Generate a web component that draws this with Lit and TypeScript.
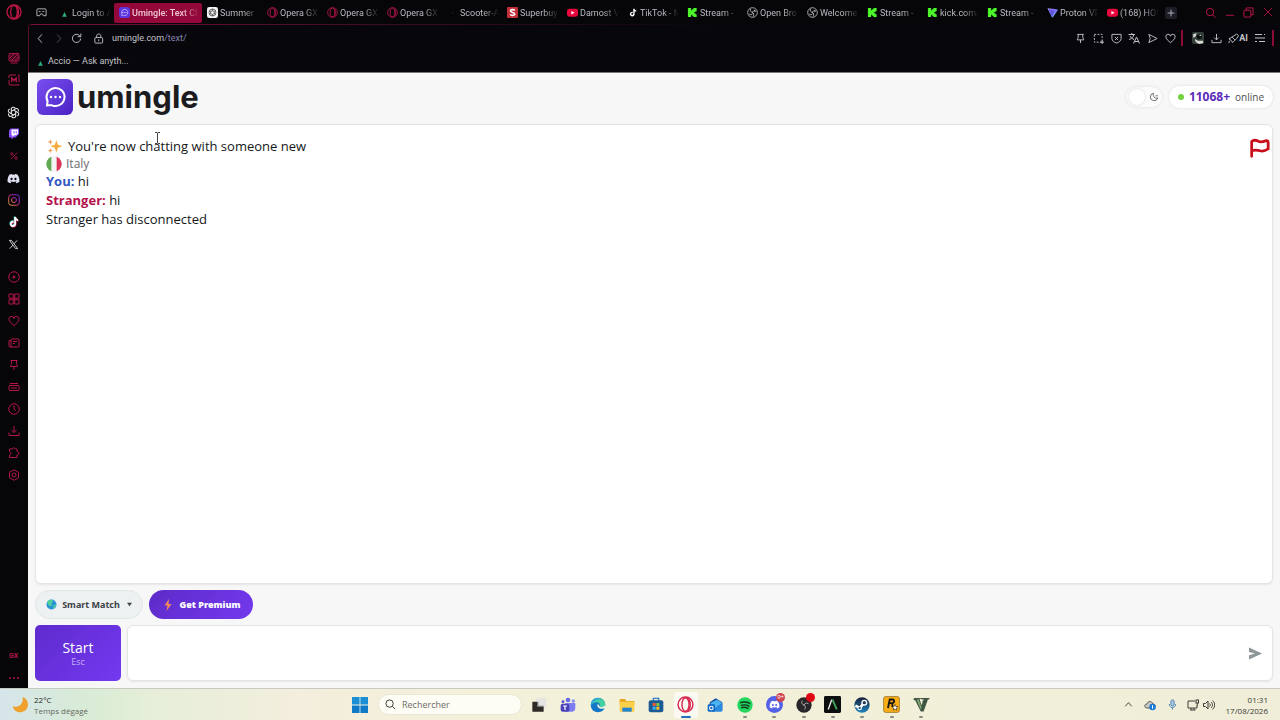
import { LitElement, html, css, svg } from "lit";
import { customElement, state } from "lit/decorators.js";
import { classMap } from "lit/directives/class-map.js";

const line = (body: unknown, cls = "i12") => html`<svg
  class="line ${cls}"
  viewBox="0 0 24 24"
  aria-hidden="true"
>${body}</svg>`;
const fill = (body: unknown, cls = "i12") => html`<svg class=${cls} viewBox="0 0 24 24" aria-hidden="true">${body}</svg>`;

/* ---------- shared shapes ---------- */
const operaRing = svg`<circle cx="12" cy="12" r="10.5"/><ellipse cx="12" cy="12" rx="5" ry="9.5"/><path d="M15 3.4c5 3.6 5 13.600 0 17.200"/>`;
const pin = svg`<path d="M5 3h14M7 3v6c0 2-2 3-2 6h14c0-3-2-4-2-6V3M12 15v7"/>`;
const heart = svg`<path d="M12 21C7 17 2 13 2 8.500A5 5 0 0 1 12 7a5 5 0 0 1 10 1.500C22 13 17 17 12 21z"/>`;
const download = svg`<path d="M12 2v13M7 10l5 5 5-5M2 15v6h20v-6"/>`;
const discordFace = svg`<path d="M19.600 5A18 18 0 0 0 15 3.600l-.7 1.300a15 15 0 0 0-4.600 0L9 3.600A18 18 0 0 0 4.400 5C1.500 9.300.7 13.600 1.100 17.800A18 18 0 0 0 6.700 20.600l1.300-2.100-2-1 .5-.4c3.600 1.700 7.400 1.700 11 0l.5.4-2 1 1.300 2.100a18 18 0 0 0 5.600-2.800c.5-4.900-.8-9.100-3.300-12.800zM8.400 15.200c-1.100 0-2-1-2-2.200s.9-2.200 2-2.200 2 1 2 2.200-.9 2.200-2 2.200zm7.200 0c-1.100 0-2-1-2-2.200s.9-2.200 2-2.200 2 1 2 2.200-.9 2.200-2 2.200z"/>`;
const note = svg`<path d="M12.500 2h3.600c.3 2.500 1.700 4 4.100 4.300v3.600c-1.500 0-2.900-.5-4.100-1.300v6.900c0 8.500-12.300 8.600-12.300.3 0-3.900 3.300-6.700 7.400-6.200v3.800c-2-.5-3.700.6-3.700 2.400 0 3.300 5 3.200 5-.6z"/>`;
const obs = svg`<circle cx="12" cy="12" r="10.500"/><path d="M8 4c-2 5 1 8 5 8M20 9c-5-2-8 0-8 4M13 21c3-4 2-8-2-9.500M4.500 15c3 3 7 2 8-1M15 6c2 1 2.500 3 2 5"/>`;
const bubble = svg`<path d="M4 20.500l.6-4.200A9 9 0 1 1 9 20.300c-1.800-.3-3.200.2-5 .2z"/>`;

const fav: Record<string, unknown> = {
  accio: fill(svg`<path fill="#2fae7a" d="M12 11l5 10H7z"/>`, "i11"),
  umingle: fill(svg`<rect width="24" height="24" rx="6" fill="#5a35e0"/><g fill="none" stroke="#d9cffc" stroke-width="2" transform="translate(3 3) scale(.75)">${bubble}</g><path stroke="#e8e2ff" stroke-width="2" stroke-dasharray="2 1.500" d="M7 12h10"/>`, "i11"),
  gpt: fill(svg`<rect width="24" height="24" rx="5" fill="#f2f2f2"/><g fill="none" stroke="#444" stroke-width="1.700"><circle cx="12" cy="12" r="7.500"/><path d="M12 8l4 2.200v4L12 16.500 8 14.200v-4zM12 4v4M19 8l-3 2.200M19 16l-3-1.800M12 20v-3.500M5 16l3-1.800M5 8l3 2.200"/></g>`, "i11"),
  opera: line(operaRing, "i11 crimson"),
  blank: fill(svg`<path fill="#101014" d="M8 13l5-4 3 4-3 4z"/>`, "i11"),
  superbuy: fill(svg`<rect width="24" height="24" rx="2" fill="#c22f3b"/><path fill="none" stroke="#fff" stroke-width="3.400" d="M17 7.500c-2-2.500-9.500-2.500-9.500 1.200 0 4 9.500 2.200 9.500 6.500 0 4-8 4-10 1"/>`, "i11"),
  yt: fill(svg`<rect y="4" width="24" height="17" rx="5" fill="#e8063c"/><path fill="#fff" d="M9.500 8.500l7 4-7 4z"/>`, "i11"),
  tiktok: fill(svg`<g fill="#fff" transform="translate(3 2) scale(.85)">${note}</g>`, "i11"),
  kick: fill(svg`<path fill="#4cf52a" d="M2 2h7v5h2.500V4.500H14V2h7v7h-2.500v2H16v2.500h2.500V16H21v6h-7v-2.500h-2.500V17H9v5H2z"/>`, "i11"),
  obs: line(obs, "i11 silver"),
  proton: fill(svg`<defs><linearGradient id="pv" x1="0" x2="1" y1="0" y2="1"><stop offset="0" stop-color="#b5a4ff"/><stop offset=".5" stop-color="#7a6cf5"/><stop offset="1" stop-color="#5de0c4"/></linearGradient></defs><path fill="url(#pv)" d="M1 2.500l21 2.200c1.600.2 2 1.800 1 3L13.500 22c-1 1.400-2.400 1.300-3.200 0z"/><path fill="#4c3ecf" d="M3 5l13 2-4.500 14z" opacity=".6"/>`, "i11"),
};

const TABS: [string, string][] = [
  ["accio", "Login to A"],
  ["umingle", "Umingle: Text Ch"],
  ["gpt", "Summer"],
  ["opera", "Opera GX"],
  ["opera", "Opera GX"],
  ["opera", "Opera GX"],
  ["blank", "Scooter-A"],
  ["superbuy", "Superbuy"],
  ["yt", "Damost V"],
  ["tiktok", "TikTok - M"],
  ["kick", "Stream -"],
  ["obs", "Open Bro"],
  ["obs", "Welcome"],
  ["kick", "Stream -"],
  ["kick", "kick.com/"],
  ["kick", "Stream -"],
  ["proton", "Proton VP"],
  ["yt", "(168) HOW"],
];

const SIDE: { label: string; art: unknown }[][] = [
  [
    { label: "GX Corner", art: line(svg`<path fill="currentColor" fill-opacity=".35" d="M4 3h16q2 0 2 2v11q0 2-2 2H4q-2 0-2-2V5q0-2 2-2z"/><path d="M3 13L13 3M6 18L20 4M13 18l9-9M5 22h14"/>`) },
    { label: "Mods", art: line(svg`<path d="M2 8V4q0-2 2-2h12M20 2h2v14M22 20v2H4q-2 0-2-2v-8"/><path stroke-width="2.600" d="M7.500 16.500V8l4.500 5 4.500-5v8.500"/>`) },
  ],
  [
    { label: "ChatGPT", art: line(svg`<path d="M12 7.500l4 2.300v4.600L12 16.700l-4-2.300V9.800zM8 9.800V5.500C8 2 13 1 15 4M12 7.500l4-2.300c3-1.700 6.500 2 4.800 5M16 9.800l4 2.300c3 1.800 1.500 6.500-2 6.500M16 14.400V18.500c0 3.500-5 4.500-7 1.500M12 16.700L8 19c-3 1.700-6.500-2-4.800-5M8 14.400L4 12.100C1 10.300 2.500 5.600 6 5.600"/>`, "i13 white") },
    { label: "Twitch", art: fill(svg`<path fill="#8a4dff" d="M5 1L2 5v14h5v4l4-4h4l7-7V1z"/><path fill="#fff" d="M7 3h13v8l-3.500 3.500h-4L9 18v-3.500H7z"/><path stroke="#8a4dff" stroke-width="2" d="M12 6v5M16.500 6v5"/>`) },
    { label: "Deals", art: line(svg`<circle cx="7" cy="7" r="3"/><circle cx="17" cy="17" r="3"/><path d="M20 4L4 20"/>`, "i10") },
    { label: "Discord", art: fill(svg`<g fill="#dfe0f2">${discordFace}</g>`, "i13") },
    { label: "Instagram", art: html`<svg class="i12" viewBox="0 0 24 24" aria-hidden="true"><defs><linearGradient id="ig" x1="1" y1="0" x2="0" y2="1"><stop offset="0" stop-color="#6a2be0"/><stop offset=".5" stop-color="#c42a86"/><stop offset="1" stop-color="#e8a02c"/></linearGradient></defs><g fill="none" stroke="url(#ig)" stroke-width="2"><rect x="1.500" y="1.500" width="21" height="21" rx="5"/><circle cx="12" cy="12" r="5"/><path d="M17.500 6h1"/></g></svg>` },
    { label: "TikTok", art: fill(svg`<g fill="#39dcd8" transform="translate(-1 -1)">${note}</g><g fill="#ee2b58" transform="translate(1 1)">${note}</g><g fill="#fff">${note}</g>`) },
    { label: "X", art: fill(svg`<path fill="none" stroke="#ddd" stroke-width="2" d="M3 3h4.500L21 21h-4.500zM20 3l-7 7.500M10.500 13.500L4 21"/>`, "i11") },
  ],
  [
    { label: "Player", art: line(svg`<circle cx="12" cy="12" r="10.500"/><path fill="currentColor" d="M10.500 9.500l4 2.500-4 2.500z"/>`) },
    { label: "Speed dial", art: line(svg`<path d="M2 2h8.500v8.500H2zM13.500 2H22v8.500h-8.500zM2 13.500h8.500V22H2zM13.500 13.500H22V22h-8.500zM10 12h4M12 10v4"/>`) },
    { label: "Favourites", art: line(heart) },
    { label: "News", art: line(svg`<rect x="6" y="4" width="16" height="16" rx="2"/><path d="M6 7H2v11q0 2 2 2h4M10 9h8M10 13h4"/>`) },
    { label: "Pinboards", art: line(pin) },
    { label: "Wallet", art: line(svg`<path d="M4 5h16M2 9h20"/><rect x="2" y="9" width="20" height="10" rx="2"/><path d="M6 14h12"/>`) },
    { label: "History", art: line(svg`<circle cx="12" cy="12" r="10.500"/><path d="M12 5v7l4 3"/>`) },
    { label: "Downloads", art: line(download) },
    { label: "Extensions", art: line(svg`<path d="M3 4h5c1-3 6-3 7 0h3v5c5 0 5 7 0 7v5H3v-5c4-1 4-6 0-7z"/>`) },
    { label: "Settings", art: line(svg`<path d="M12 1.500l9 5v11l-9 5-9-5v-11z"/><circle cx="12" cy="12" r="4"/>`) },
  ],
];

const bars = line(svg`<path d="M2 5h14M20 5h2M2 12h20M2 19h4M10 19h12"/>`);

const APPS: { name: string; art: unknown; mark?: string }[] = [
  { name: "Task view", art: fill(svg`<rect x="8" y="1" width="15" height="15" rx="2" fill="#e4e4e2"/><path fill="#2d2a28" d="M2 7h7v8h10v7H2z"/><path fill="#777" d="M9 7h2v6h8v2H9z"/>`, "i16") },
  { name: "Teams", art: fill(svg`<circle cx="12" cy="4.500" r="3.500" fill="#6a6ce8"/><circle cx="20" cy="6" r="2.600" fill="#8c8ff5"/><circle cx="4.500" cy="7" r="2.200" fill="#5553c9"/><path fill="#7b7df0" d="M8 9h14q1 0 1 2v5q0 6-6 6H9z"/><rect x="1" y="10" width="13" height="12" rx="3" fill="#4a41b8"/><path stroke="#fff" stroke-width="1.800" d="M4.500 13.500h6M7.500 13.500v6"/>`, "i16") },
  { name: "Edge", art: fill(svg`<circle cx="12" cy="12" r="11" fill="#1577c8"/><path fill="#43cfa0" d="M2 8C5-1 22-1 23 11c0 5-6 6-9 4 2-4 0-7-4-7-3 0-6 1-8 4z"/><path fill="#2ba9e1" d="M2 8C6 0 14 0 18 4c-6-2-12 0-16 8z"/><path fill="#f4f3df" d="M11 12c0 5 5 7 10 5l2 1-1-6c-2 4-7 4-8 2 0-3-3-4-3-2z"/>`, "i16") },
  { name: "Explorer", art: fill(svg`<path fill="#e8a41c" d="M1 3h8l2 3h12v6H1z"/><path fill="#fbd04b" d="M1 7h22v14q0 1-1 1H2q-1 0-1-1z"/><path fill="#2184d0" d="M5 16h14v6H5z"/>`, "i16") },
  { name: "Store", art: fill(svg`<path fill="none" stroke="#2d7fc7" stroke-width="2" d="M8 6V2h8v4"/><rect x="1" y="5" width="22" height="18" rx="3" fill="#1c5a95"/><path fill="#ef5b37" d="M7 9h4.500v4.500H7z"/><path fill="#86c440" d="M12.500 9H17v4.500h-4.500z"/><path fill="#35b3ee" d="M7 14.500h4.500V19H7z"/><path fill="#fcc02b" d="M12.500 14.500H17V19h-4.500z"/>`, "i16") },
  { name: "Opera GX", art: line(operaRing, "i17 operared"), mark: "active" },
  { name: "Outlook", art: fill(svg`<path fill="#164d9e" d="M4 8l9-6 10 6v12H4z"/><path fill="#4bb4f0" d="M5 9l10-5 8 5-12 9z"/><path fill="#2b8be0" d="M23 9v11q0 2-2 2H7z"/><rect x="1" y="11" width="11" height="11" rx="2" fill="#1268c3"/><circle cx="6.500" cy="16.500" r="2.700" fill="none" stroke="#fff" stroke-width="1.600"/>`, "i16") },
  { name: "Spotify", art: fill(svg`<circle cx="12" cy="12" r="11.500" fill="#22d65e"/><path fill="none" stroke="#12351f" stroke-width="2.200" stroke-linecap="round" d="M5.500 8.500c5-1.500 9.500-1 13.500 1.200M6.500 12.500c4-1.200 8-.8 11.500 1.200M7 16c3.500-1 6.500-.6 9.500 1"/>`, "i16"), mark: "open" },
  { name: "Discord", art: fill(svg`<circle cx="12" cy="12" r="12" fill="#5560e8"/><g fill="#fff" transform="translate(4.500 4.500) scale(.63)">${discordFace}</g>`, "i17"), mark: "open badge" },
  { name: "OBS Studio", art: fill(svg`<circle cx="12" cy="12" r="11.500" fill="#292629"/><g fill="none" stroke="#bdb8b8" stroke-width="2" transform="translate(4 4) scale(.67)"><path d="M8 2c-3 6 1 10 5 10M22 9c-5-3-10 0-10 4M13 22c4-5 2-9-2-10"/></g>`, "i16"), mark: "open rec" },
  { name: "Accio", art: fill(svg`<rect width="24" height="24" rx="2" fill="#0c0f0d"/><path fill="#f3f3f3" d="M10 5h2l-5 14H5z"/><path fill="none" stroke="#3fa25a" stroke-width="2.600" d="M12 5l6 14"/>`, "i17"), mark: "open" },
  { name: "Steam", art: fill(svg`<defs><linearGradient id="st" x1="0" y1="0" x2="0" y2="1"><stop offset="0" stop-color="#15203c"/><stop offset="1" stop-color="#2084bf"/></linearGradient></defs><circle cx="12" cy="12" r="11.500" fill="url(#st)"/><path stroke="#fff" stroke-width="4" d="M2 13l7 3 5-6"/><circle cx="15.500" cy="8.500" r="4.500" fill="#fff"/><circle cx="15.500" cy="8.500" r="2.500" fill="#26385a"/><circle cx="8.500" cy="16.500" r="3.500" fill="#fff"/><circle cx="8.500" cy="16.500" r="1.800" fill="#27618f"/>`, "i16"), mark: "open" },
  { name: "Rockstar Games", art: fill(svg`<rect x=".8" y=".8" width="22.400" height="22.400" rx="3" fill="#f9ad17" stroke="#8b6a22"/><path fill="none" stroke="#151515" stroke-width="2.600" d="M7 17l2.500-12h4c3 0 3 5-.5 5H9M12 10.500c2 .5 1 3.500 1.500 5"/><path fill="#fff" stroke="#151515" stroke-width=".8" d="M17 12l1.200 2.800 3 .2-2.300 2 .7 3-2.600-1.600-2.600 1.600.7-3-2.300-2 3-.2z"/>`, "i17"), mark: "open" },
  { name: "GTA V", art: fill(svg`<path fill="#3f5944" d="M1 3h8l3 10 3-8h-3V3h11v2h-2l-6 17h-4L3 6H1z"/><path fill="#86a776" d="M5 5l6 14 1-3-4-11z"/><path fill="none" stroke="#34433a" d="M2 3.500h21M13 8h7"/>`, "i17"), mark: "open" },
];

@customElement("app-root")
export class AppRoot extends LitElement {
  @state() private draft = "";

  static styles = css`
    :host {
      display: grid;
      grid-template-rows: minmax(0, 1fr) 32px;
      height: 100vh;
      overflow: hidden;
      background: #060609;
      font-family: "Open Sans", "Noto Sans", sans-serif;
      color: #15171a;
    }
    * { box-sizing: border-box; }
    button {
      font: inherit;
      color: inherit;
      border: 0;
      padding: 0;
      margin: 0;
      background: none;
      display: flex;
      align-items: center;
      justify-content: center;
    }
    svg { display: block; flex: none; }
    a { color: inherit; text-decoration: none; }
    .line { fill: none; stroke: currentColor; stroke-width: 2; }
    .i10 { width: 10px; height: 10px; }
    .i11 { width: 11px; height: 11px; }
    .i12 { width: 12px; height: 12px; }
    .i13 { width: 13px; height: 13px; }
    .i16 { width: 16px; height: 16px; }
    .i17 { width: 17px; height: 17px; }
    .crimson { color: #b3164a; }
    .silver { color: #b4b4b8; }
    .white { color: #e4e4e4; }
    .operared { color: #d9274f; }

    .browser {
      display: grid;
      grid-template: 24px minmax(0, 1fr) / 28px minmax(0, 1fr);
      font-family: Roboto, sans-serif;
      min-height: 0;
    }
    .gx { color: #c01748; }
    .tabbar { display: flex; align-items: center; padding-right: 3px; }
    .islands { width: 26px; height: 24px; color: #bbbbc2; }
    .tabs { display: flex; flex: 1; min-width: 0; height: 20px; margin-top: 1px; }
    .tab {
      flex: 0 0 60px;
      min-width: 0;
      gap: 2px;
      padding: 0 3px 0 5px;
      justify-content: flex-start;
      color: #b9b9c2;
      font-size: 9px;
      line-height: 12px;
    }
    .tab span {
      flex: 1;
      overflow: hidden;
      white-space: nowrap;
      text-align: left;
      mask-image: linear-gradient(90deg, #000 60%, transparent);
    }
    .tab.on {
      flex-basis: 88px;
      background: #93083a;
      border-radius: 2px;
      color: #f0c6d3;
      font-weight: 500;
    }
    .tab.on span { mask-image: linear-gradient(90deg, #000 75%, transparent); }
    .new {
      width: 12px;
      height: 12px;
      margin: 4px 3px;
      background: #1d1d27;
      color: #c8c8d0;
      border-radius: 2px;
    }
    .winctl { display: flex; color: #c4164c; }
    .winctl button { width: 19px; height: 24px; }

    .sidebar {
      display: flex;
      flex-direction: column;
      color: #b3164a;
      padding-top: 23px;
    }
    .sidebar button { width: 27px; height: 22px; }
    .group { margin-bottom: 11px; }
    .group:first-child { margin-bottom: 10px; }
    .sidefoot { margin-top: auto; margin-bottom: -1px; }
    .sidebar .gxword { font-size: 7px; font-weight: 700; }

    .window {
      display: grid;
      grid-template-rows: 26px 22px minmax(0, 1fr);
      min-width: 0;
      min-height: 0;
      border-left: 1px solid #57102c;
      border-top-left-radius: 4px;
      background: linear-gradient(90deg, #7a1238, transparent 55%) top / 100% 1px no-repeat, #07070b;
    }
    .toolbar { display: flex; align-items: center; color: #c4c4cc; padding: 2px 6px 0 2px; }
    .toolbar button { width: 18px; height: 22px; }
    .toolbar .dim { color: #55555f; }
    .lock { width: 18px; margin: 0 5px 0 4px; display: flex; justify-content: center; }
    .url { flex: 1; font-size: 9px; line-height: 12px; color: #c4c4cc; }
    .url b { font-weight: 400; color: #8584ac; }
    .bar { width: 2px; height: 16px; background: #8c0c38; margin: 0 6px 0 2px; }
    .bar.end { margin: 0 0 0 3px; }
    .toolbar .ai { width: 26px; font-size: 9px; font-weight: 700; line-height: 12px; }
    .bookmarks { display: flex; align-items: center; padding-left: 6px; font-size: 9px; line-height: 12px; color: #c4c4cc; }
    .bookmarks a { display: flex; align-items: center; gap: 2px; }

    .page {
      display: flex;
      flex-direction: column;
      margin-left: -1px;
      min-height: 0;
      padding: 0 7px 7px;
      background: #f7f7f8;
      border-top: 1px solid #77777a;
      font-family: "Open Sans", "Noto Sans", sans-serif;
      color: #15171a;
    }
    .head { display: flex; align-items: center; height: 51px; padding: 0 0 3px 2px; }
    .brand { display: flex; align-items: center; gap: 4px; margin-right: auto; }
    .mark {
      display: grid;
      place-items: center;
      width: 36px;
      height: 36px;
      border-radius: 6px;
      background: linear-gradient(135deg, #7a4ff0, #4a22c4);
      color: #fff;
    }
    .mark svg { width: 24px; height: 24px; }
    .word { font: 700 31px/36px Inter, sans-serif; color: #1c1c1e; }
    .theme { display: flex; align-items: center; gap: 4px; width: 36px; height: 20px; padding: 0 2px; margin-right: 7px; border-radius: 10px; background: #fcfcfc; box-shadow: 0 0 3px #dcdcdf; color: #555; }
    .theme i { width: 16px; height: 16px; border-radius: 50%; background: #fff; box-shadow: 0 0 3px #d2d2d6; }
    .online { display: flex; align-items: center; height: 22px; padding: 0 9px; border-radius: 11px; background: #fff; box-shadow: 0 0 3px #dcdcdf; font-size: 10px; line-height: 14px; color: #4d4d52; }
    .online i { width: 6px; height: 6px; border-radius: 50%; background: #72d13c; margin-right: 5px; }
    .online b { font-size: 12px; color: #5b2bb8; margin-right: 5px; }

    .chat {
      display: flex;
      flex: 1;
      min-height: 0;
      padding: 12px 2px 0 10px;
      background: #fff;
      border: 1px solid #e4e4e7;
      border-radius: 6px;
      box-shadow: 0 1px 2px #e6e6e9;
      position: relative;
    }
    .log { display: flex; flex-direction: column; gap: 1px; flex: 1; font-size: 13px; line-height: 18px; }
    .log p { margin: 0; }
    .log .lead { display: flex; align-items: center; gap: 5px; padding-left: 1px; font-weight: 500; }
    .log .from { display: flex; align-items: center; gap: 4px; font-size: 12px; line-height: 15px; height: 15px; color: #6c6c70; }
    .you { color: #3157c4; }
    .them { color: #b5124a; }
    .gone { font-weight: 500; }
    .flag { width: 22px; height: 22px; color: #c80f1c; }
    .flag svg { width: 22px; height: 22px; stroke-width: 3; }
    .ibeam { position: absolute; left: 117px; top: 7px; width: 9px; height: 12px; }

    .chips { display: flex; gap: 6px; padding: 6px 0; }
    .chip { height: 29px; border-radius: 15px; font-family: "Noto Sans", sans-serif; font-size: 9px; line-height: 14px; }
    .smart { gap: 5px; width: 108px; background: #edf1f2; border: 1px solid #e1e6e8; color: #3c4246; font-weight: 700; }
    .smart .caret { margin-left: 2px; width: 5px; height: 5px; }
    .prem { gap: 6px; width: 104px; background: linear-gradient(135deg, #5d2bc8, #7339ee); color: #fff; font-weight: 900; }
    .compose { display: flex; gap: 6px; height: 56px; }
    .start {
      flex: 0 0 86px;
      flex-direction: column;
      border-radius: 5px;
      background: linear-gradient(135deg, #5f2bcd, #7339f0);
      color: #fff;
      font-size: 14px;
      line-height: 18px;
    }
    .start small { font-size: 9px; line-height: 10px; color: #c3aef2; }
    .box { display: flex; align-items: center; flex: 1; padding-right: 7px; background: #fff; border: 1px solid #e4e4e7; border-radius: 6px; box-shadow: 0 1px 2px #e6e6e9; }
    .box textarea { flex: 1; height: 100%; padding: 10px; border: 0; outline: 0; resize: none; background: none; font: inherit; font-size: 13px; }
    .send { width: 20px; height: 20px; color: #8d9698; }

    .taskbar {
      display: grid;
      grid-template-columns: 1fr auto 1fr;
      align-items: center;
      border-top: 1px solid #c9cabf;
      background: linear-gradient(90deg, #d6e5ea, #d9ecd5 7%, #e6eed9 12%, #f3eedd 23%, #f4f1da 40%, #f0eed8 100%);
      color: #33342f;
      font-size: 8px;
      line-height: 11px;
    }
    .weather { justify-self: start; justify-content: flex-start; gap: 5px; padding-left: 12px; text-align: left; }
    .weather span { color: #66685f; }
    .weather b { display: block; font-weight: 500; color: #2a2b28; }
    .dock { display: flex; align-items: center; padding-left: 2px; }
    .win { width: 28px; height: 28px; margin-right: 4px; }
    .search { display: flex; align-items: center; gap: 6px; width: 144px; height: 21px; padding: 0 6px; margin-right: 2px; border-radius: 11px; background: #fefdf5; border: 1px solid #e9e6d3; color: #2b2b2b; }
    .search input { flex: 1; min-width: 0; padding: 0; border: 0; outline: 0; background: none; font: 9px/12px "Open Sans", sans-serif; }
    .search input::placeholder { color: #6c6c66; opacity: 1; }
    .apps { display: grid; grid-template-columns: repeat(14, 1fr); width: 412px; }
    .app { position: relative; height: 26px; justify-self: center; width: 24px; border-radius: 3px; }
    .app.active { background: #fbfaf2; }
    .app.open::after, .app.active::after {
      content: "";
      position: absolute;
      bottom: 0;
      left: 10px;
      width: 4px;
      height: 2px;
      border-radius: 1px;
      background: #8b8b80;
    }
    .app.active::after { left: 7px; width: 10px; background: #1f6fc0; }
    .dot { position: absolute; top: 1px; right: 1px; width: 9px; height: 9px; border-radius: 50%; background: #cf4550; color: #fff; font-size: 6px; line-height: 9px; text-align: center; }
    .rec .dot { background: #e00512; }
    .tray { display: flex; align-items: center; justify-content: flex-end; padding-right: 12px; color: #3b3c36; }
    .tray button { width: 22px; height: 24px; }
    .tray .net { width: 36px; gap: 4px; }
    .clock { width: 49px; text-align: right; font-weight: 500; }
  `;

  private tab([icon, title]: [string, string], i: number) {
    return html`<button
      class=${classMap({ tab: true, on: i === 1 })}
      role="tab"
      aria-selected=${i === 1 ? "true" : "false"}
    >${fav[icon]}<span>${title}</span></button>`;
  }

  private chrome() {
    return html`
      <button class="gx" aria-label="Menu">${line(operaRing, "i16")}</button>
      <header class="tabbar">
        <button class="islands" aria-label="Workspaces">${line(svg`<path d="M4 4h16q2 0 2 2v13h-6l-2-4h-4l-2 4H2V6q0-2 2-2z"/><path d="M6 10h4M14 10h4"/>`, "i11")}</button>
        <div class="tabs" role="tablist">
          ${TABS.map((t, i) => this.tab(t, i))}
          <button class="new" aria-label="New tab">${line(svg`<path d="M12 4v16M4 12h16"/>`, "i10")}</button>
        </div>
        <div class="winctl">
          <button aria-label="Search tabs">${line(svg`<circle cx="11" cy="11" r="8"/><path d="M17 17l6 6"/>`, "i11")}</button>
          <button aria-label="Minimise">${line(svg`<path d="M2 20h20"/>`, "i10")}</button>
          <button aria-label="Restore">${line(svg`<rect x="2" y="7" width="15" height="15" rx="2"/><path d="M7 7V2h15v15h-5"/>`, "i11")}</button>
          <button aria-label="Close">${line(svg`<path d="M2 2l20 20M22 2L2 22"/>`, "i10")}</button>
        </div>
      </header>`;
  }

  private toolbar() {
    return html`<nav class="toolbar" aria-label="Navigation">
      <button aria-label="Back">${line(svg`<path d="M15 3l-8 9 8 9"/>`, "i11")}</button>
      <button class="dim" aria-label="Forward">${line(svg`<path d="M9 3l8 9-8 9"/>`, "i11")}</button>
      <button aria-label="Reload">${line(svg`<path d="M21 12a9 9 0 1 1-2.500-6.500L21 8M21.500 1v7h-7"/>`, "i11")}</button>
      <span class="lock">${line(svg`<rect x="4" y="10" width="17" height="12" rx="2"/><path d="M8 10V6c0-5 9-5 9 0v4M12.500 14v4"/>`, "i11")}</span>
      <a class="url" href="#">umingle.com<b>/text/</b></a>
      <button aria-label="Pin">${line(pin, "i11")}</button>
      <button aria-label="Snapshot">${line(svg`<path stroke-dasharray="4 3" d="M3 3h17v17H3z"/><path d="M20 16v8M16 20h8"/>`, "i11")}</button>
      <button aria-label="Ad blocker">${line(svg`<path d="M2 3h20v9c0 5-5 9-10 10C7 21 2 17 2 12zM8.500 8.500l7 7M15.500 8.500l-7 7"/>`, "i11")}</button>
      <button aria-label="Translate">${line(svg`<path d="M1 5h13M7.500 2v3M12 5c-1 5-6 9-10 10M4 8c2 4 5 6 8 7M11 23l6-13 6 13M13 19h8"/>`, "i12")}</button>
      <button aria-label="Send page">${line(svg`<path d="M4 3l18 9-18 9 3-9z"/>`, "i11")}</button>
      <button aria-label="Bookmark">${line(heart, "i11")}</button>
      <span class="bar"></span>
      <button aria-label="Profile">${fill(svg`<rect width="24" height="24" rx="4" fill="#34403b"/><path fill="#d6d8d2" d="M2 5l7-3-1 6-5 4zM6 14c4 4 10 4 15 3l2 5-8 2C9 22 5 19 6 14z"/><path fill="#0c0f0e" d="M8 7l10-3 2 8-8 3z"/><path fill="#e2e2dd" d="M14 7l4-2v3z"/>`)}</button>
      <button aria-label="Downloads">${line(download, "i11")}</button>
      <button class="ai" aria-label="AI">${line(svg`<path d="M13 6l6-4 4 4-4 6-9 9-3-5-5-3zM9 9l6 6M3 17l-1 5"/>`, "i11")}AI</button>
      <button aria-label="Easy setup">${bars}</button>
      <span class="bar end"></span>
    </nav>`;
  }

  private page() {
    return html`<main class="page">
      <header class="head">
        <a class="brand" href="#">
          <span class="mark"><svg class="line" viewBox="0 0 24 24" aria-hidden="true">${bubble}<path stroke-linecap="round" stroke-width="2.400" d="M8 12h.01M12.500 12h.01M17 12h.01"/></svg></span>
          <span class="word">umingle</span>
        </a>
        <button class="theme" aria-label="Dark mode"><i></i>${line(svg`<path d="M11 3a9 9 0 1 0 10 11c-6 3-13-3-10-11zM16 9h5"/>`, "i10")}</button>
        <div class="online"><i></i><b>11068+</b>online</div>
      </header>
      <section class="chat">
        <div class="log">
          <p class="lead">${fill(svg`<path fill="#f4ad3d" d="M14 3l2.300 7.200L23 12.500l-6.700 2.300L14 22l-2.300-7.200L5 12.500l6.700-2.300z"/><path fill="#ef9b4a" d="M5 2l1 3 3 1-3 1-1 3-1-3-3-1 3-1zM5 15l1 3 3 1-3 1-1 3-1-3-3-1 3-1z"/>`, "i16")}You're now chatting with someone new</p>
          <p class="from">${fill(svg`<defs><clipPath id="rd"><circle cx="12" cy="12" r="11.500"/></clipPath></defs><g clip-path="url(#rd)"><path fill="#f3f3f3" d="M0 0h24v24H0z"/><path fill="#60a950" d="M0 0h8v24H0z"/><path fill="#dc3556" d="M16 0h8v24h-8z"/></g>`, "i16")}Italy</p>
          <p><b class="you">You:</b> hi</p>
          <p><b class="them">Stranger:</b> hi</p>
          <p class="gone">Stranger has disconnected</p>
        </div>
        <button class="flag" aria-label="Report"><svg class="line" viewBox="0 0 24 24" stroke-linecap="round" stroke-linejoin="round" aria-hidden="true"><path d="M4 21V5c3-3 6-1 8 0s5 0 8-1c2 0 2 1 2 2v7c-3 2-6 3-9 2s-6-1-9 0"/></svg></button>
        <svg class="ibeam" viewBox="0 0 9 12" aria-hidden="true"><path fill="none" stroke="#444" d="M2 .5h2l.5.5.5-.5h2M4.500 1v10M2 11.500h2l.5-.5.5.5h2"/></svg>
      </section>
      <div class="chips">
        <button class="chip smart">${fill(svg`<circle cx="12" cy="12" r="11" fill="#2a93d8"/><path fill="#4fd09a" d="M4 4c5-4 11-3 12 1l-4 4 1 5-5 2-5-6zM17 13l5-1c0 4-3 8-7 9z"/>`, "i11")}Smart Match<svg class="caret" viewBox="0 0 6 6" aria-hidden="true"><path fill="currentColor" d="M0 1h6L3 5z"/></svg></button>
        <button class="chip prem">${fill(svg`<path fill="#f58a5b" d="M14 0L5 13h6L9 24l10-14h-6z"/>`, "i12")}Get Premium</button>
      </div>
      <form class="compose" @submit=${(e: Event) => e.preventDefault()}>
        <button class="start" type="button">Start<small>Esc</small></button>
        <div class="box">
          <textarea aria-label="Message" .value=${this.draft} @input=${(e: Event) => (this.draft = (e.target as HTMLTextAreaElement).value)}></textarea>
          <button class="send" aria-label="Send">${fill(svg`<path fill="currentColor" d="M0 1l24 11L0 23v-8l11-3L0 9z"/>`, "i13")}</button>
        </div>
      </form>
    </main>`;
  }

  private taskbar() {
    return html`<footer class="taskbar">
      <button class="weather">${fill(svg`<path fill="#f0a02c" d="M15 1c10 4 10 17 1 21C9 25 2 21 1 14c7 4 16-2 14-13z"/>`, "i17")}<span><b>22°C</b>Temps dégagé</span></button>
      <div class="dock">
        <button class="win" aria-label="Start menu">${fill(svg`<path fill="#1b8fd6" d="M0 0h11.400v11.400H0zM12.600 0H24v11.400H12.600z"/><path fill="#0f7ac8" d="M0 12.600h11.400V24H0zM12.600 12.600H24V24H12.600z"/>`, "i16")}</button>
        <label class="search">${line(svg`<circle cx="10" cy="10" r="8"/><path d="M16 16l6 6"/>`, "i11")}<input type="text" placeholder="Rechercher" aria-label="Rechercher" /></label>
        <div class="apps">
          ${APPS.map((a) => html`<button class="app ${a.mark ?? ""}" aria-label=${a.name}>${a.art}${a.mark?.includes("badge") ? html`<span class="dot">9+</span>` : a.mark?.includes("rec") ? html`<span class="dot"></span>` : ""}</button>`)}
        </div>
      </div>
      <div class="tray">
        <button aria-label="Hidden icons">${line(svg`<path d="M5 16l7-8 7 8"/>`, "i11")}</button>
        <button aria-label="Cloud">${fill(svg`<path fill="#c9cac4" stroke="#5c5d57" stroke-width="2" d="M6 18C0 18 0 10 6 10c1-6 10-7 12 0 5 0 6 8 0 8z"/><circle cx="17" cy="16" r="6.500" fill="#1679d3"/><path stroke="#fff" stroke-width="2" d="M17 12.500v7"/>`)}</button>
        <button aria-label="Microphone">${line(svg`<rect x="8.500" y="2" width="7" height="13" rx="3.500" stroke="#3b78b5" fill="#b7cee0"/><path stroke="#3b78b5" d="M5 11c0 10 14 10 14 0M12 18.500V23"/>`, "i11")}</button>
        <button class="net" aria-label="Network and volume">${line(svg`<path d="M16 4H2v14h18v-6M8 18v4M6 22h11M14 18v4"/><rect x="18" y="2" width="5" height="6"/><path d="M20.500 8v5"/>`, "i12")}${line(svg`<path d="M1 9h4l5-5v16l-5-5H1zM13 9c2 2 2 4 0 6M16 6c4 4 4 8 0 12M19 3c6 6 6 12 0 18"/>`, "i12")}</button>
        <div class="clock">01:31<br />17/08/2026</div>
      </div>
    </footer>`;
  }

  render() {
    return html`
      <div class="browser">
        ${this.chrome()}
        <aside class="sidebar">
          ${SIDE.map((g) => html`<div class="group">${g.map((s) => html`<button aria-label=${s.label}>${s.art}</button>`)}</div>`)}
          <div class="sidefoot">
            <button class="gxword">GX</button>
            <button aria-label="More">${line(svg`<path stroke-width="3" stroke-dasharray="4 4" d="M2 12h20"/>`)}</button>
          </div>
        </aside>
        <div class="window">
          ${this.toolbar()}
          <div class="bookmarks"><a href="#">${fav.accio}Accio — Ask anyth...</a></div>
          ${this.page()}
        </div>
      </div>
      ${this.taskbar()}
    `;
  }
}
